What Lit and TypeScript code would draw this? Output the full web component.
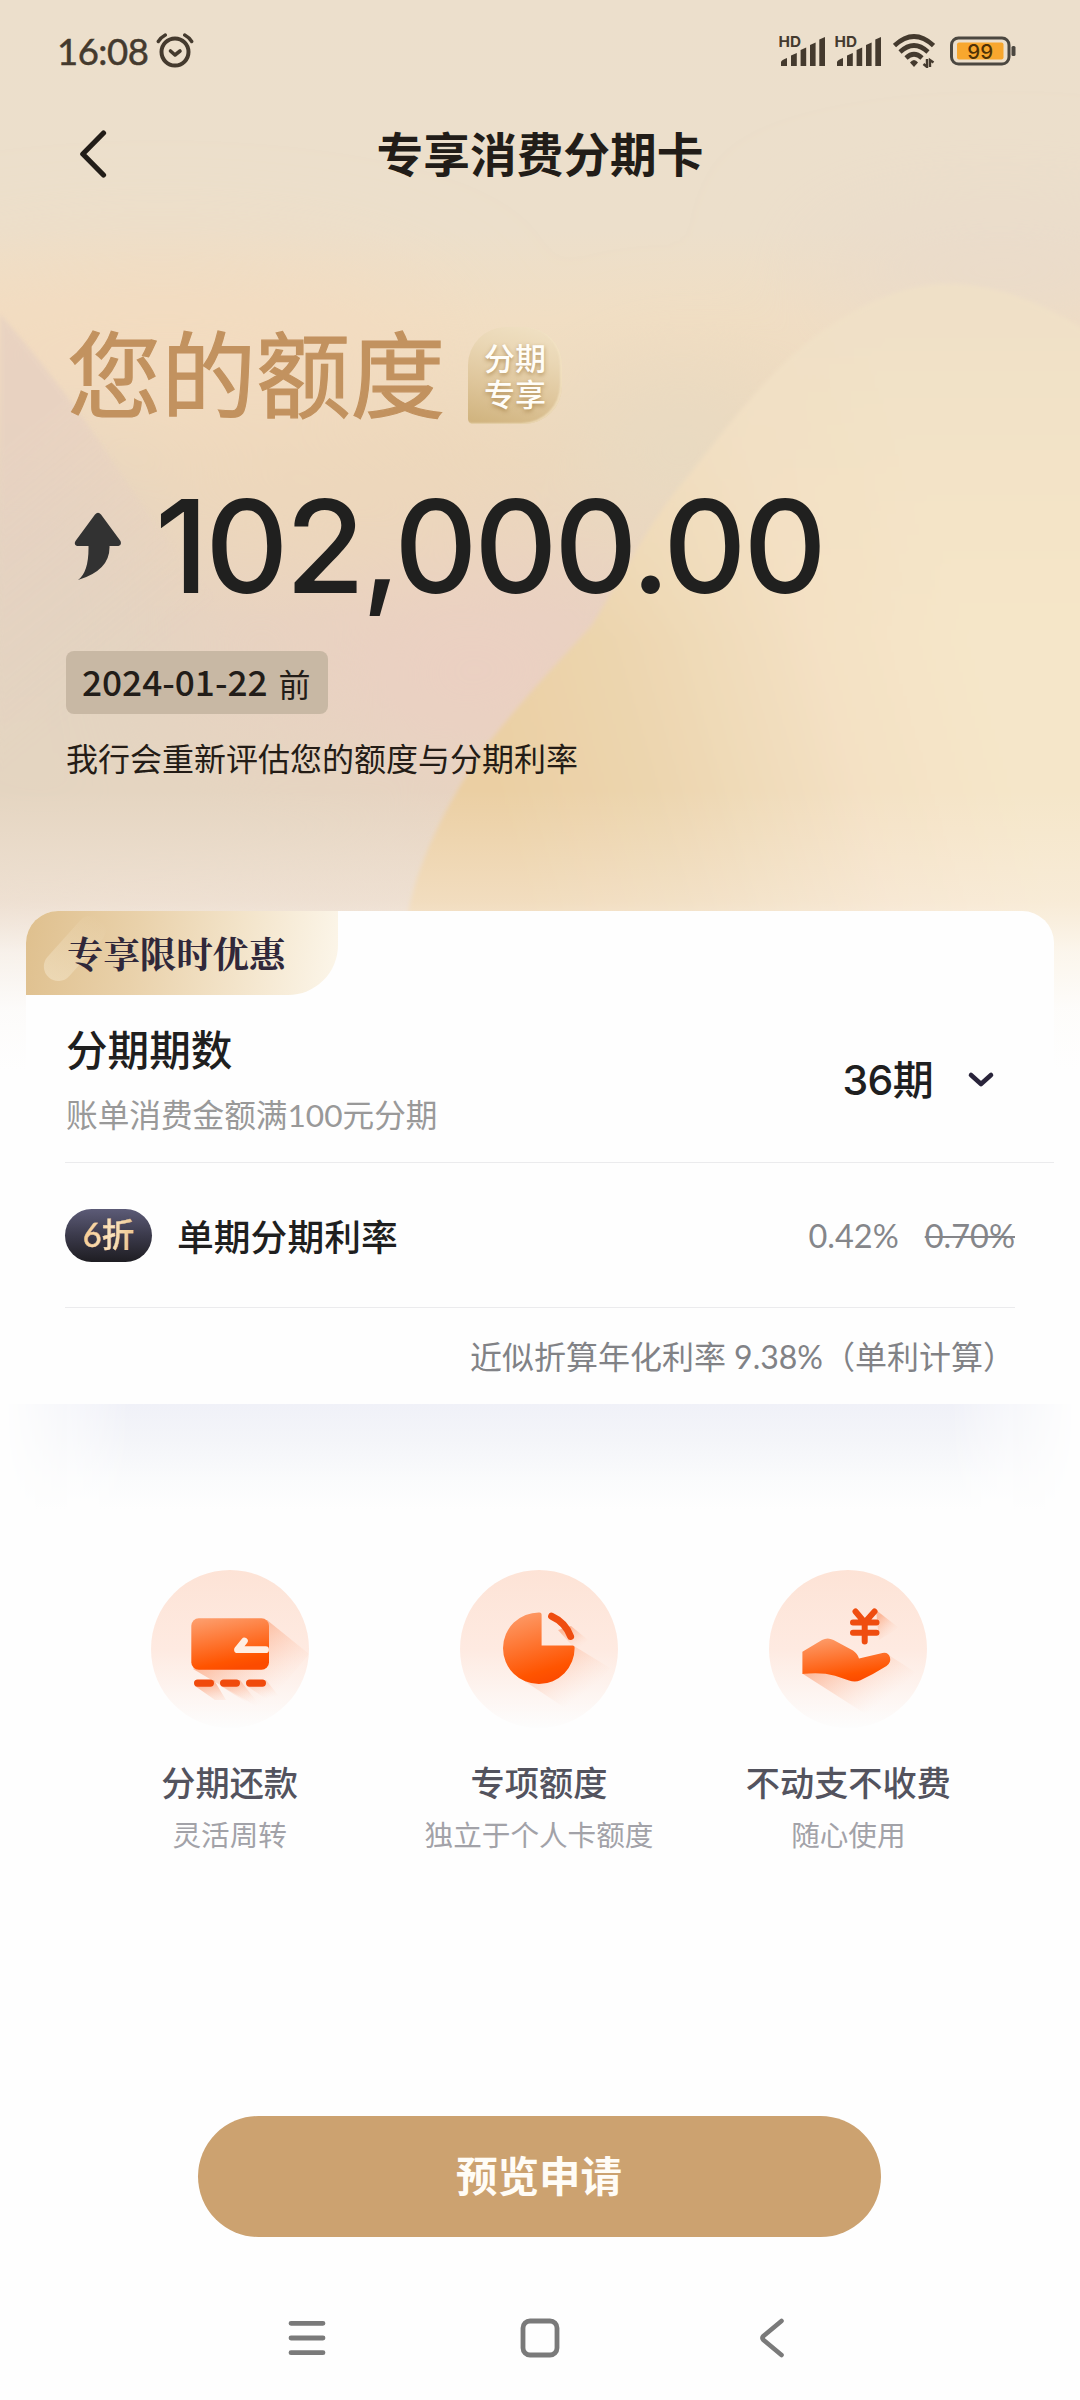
import { LitElement, html, css, svg } from "lit";
import { customElement } from "lit/decorators.js";

interface Feature {
  icon: unknown;
  title: string;
  note: string;
}

const walletIcon = svg`
  <path d="M116 50 L158 84 L112 140 L42 99 Z" fill="url(#cast)"></path>
  <path d="M44 116 L63 110 L75 130 L64 130 Z M70 116 L89 110 L106 132 L95 132 Z M96 116 L115 110 L134 134 L122 134 Z" fill="url(#castSmall)"></path>
  <rect x="40.3" y="48.3" width="77.7" height="51.4" rx="7.5" fill="url(#body)"></rect>
  <path d="M114.600 79.7 H86.5 L93.4 71" fill="none" stroke="#ffeee3" stroke-width="6.8" stroke-linejoin="round" stroke-linecap="round"></path>
  <g fill="#f04a0c"><rect x="43" y="109.4" width="20" height="7.4" rx="3.7"></rect><rect x="69" y="109.4" width="20" height="7.4" rx="3.7"></rect><rect x="95" y="109.4" width="20" height="7.4" rx="3.7"></rect></g>`;

const pieIcon = svg`
  <path d="M114 76 L150 98 L114 144 L54 104 Z" fill="url(#cast)"></path>
  <path d="M111 56 L128 70 L118 82 L98 60Z" fill="url(#castSmall)"></path>
  <path d="M79.5 42.4 Q81.6 42.4 81.6 44.4 V75.5 H112.6 Q114.6 75.5 114.6 77.5 A35.8 35.8 0 1 1 79.5 42.4 Z" fill="url(#body)"></path>
  <path d="M91.6 46.2 A36 36 0 0 1 110.6 66.4" fill="none" stroke="#ef4d10" stroke-width="7" stroke-linecap="round"></path>`;

const handIcon = svg`
  <path d="M118 84 L146 102 L106 150 L34 104 Z" fill="url(#cast)"></path>
  <path d="M107 40 L130 58 L110 70 Z" fill="url(#castSmall)"></path>
  <path d="M33.4 81.7 L53 70 Q58.6 66.800 64.500 70 L84 80.500 Q88.500 83.500 90 88.500 L113.500 82.900 Q119.500 81.800 121 87.500 Q122.300 92.500 117.500 96 Q104 104.500 91.500 110.300 Q86 112.800 80 110.500 L66 105.700 Q52 101.800 33.4 104 Z" fill="url(#body)"></path>
  <path d="M86.500 41.500 L95.700 52.500 L105.500 41.500 M95.700 52.500 V71.500 M84 52.600 H107.500 M84 62.700 H107.500" fill="none" stroke="#ef4d10" stroke-width="6" stroke-linecap="round"></path>`;

@customElement("signal-bars")
export class SignalBars extends LitElement {
  static styles = css`
    :host { display: block; width: 47px; height: 32px; }
    svg { display: block; }
    .hd { font: 700 14.500px Inter, sans-serif; fill: #443a2e; }
  `;
  render() {
    return html`<svg width="48" height="32" viewBox="0 0 48 32">
      <text class="hd" x="-0.5" y="13" textLength="22.500" lengthAdjust="spacingAndGlyphs">HD</text>
      <g fill="#443a2e">
        <path d="M2 32 V28 Q2.500 26 8 24 V32 Z"></path>
        <path d="M12 32 V21.500 L17.800 19 V32 Z"></path>
        <path d="M21.600 32 V16 L27.200 13.500 V32 Z"></path>
        <path d="M31 32 V11 L36.600 8.500 V32 Z"></path>
        <path d="M40.300 32 V5.500 L46 3 V32 Z"></path>
      </g>
    </svg>`;
  }
}

@customElement("feature-item")
export class FeatureItem extends LitElement {
  static properties = { feature: { attribute: false } };
  declare feature: Feature;
  static styles = css`
    :host { display: flex; flex-direction: column; align-items: center; flex: 1; }
    svg { display: block; }
    .title { margin-top: 35px; line-height: 40px; font-size: 34.200px; font-weight: 500; color: #53535e; white-space: nowrap; }
    .note { margin-top: 13px; line-height: 38px; font-size: 28.600px; color: #a2a2a8; white-space: nowrap; }
  `;
  render() {
    return html`
      <svg width="158" height="158" viewBox="0 0 158 158">
        <defs>
          <linearGradient id="disc" x1="0" y1="0" x2="0" y2="1">
            <stop offset="0" stop-color="#fde3d6"></stop>
            <stop offset=".5" stop-color="#feeae1"></stop>
            <stop offset="1" stop-color="#fdfdfd"></stop>
          </linearGradient>
          <linearGradient id="body" x1=".2" y1="0" x2=".5" y2="1">
            <stop offset="0" stop-color="#fd9c6a"></stop>
            <stop offset=".85" stop-color="#ff5400"></stop>
            <stop offset="1" stop-color="#fc4b00"></stop>
          </linearGradient>
          <linearGradient id="cast" x1="66" y1="76" x2="110" y2="134" gradientUnits="userSpaceOnUse">
            <stop offset="0" stop-color="#fb8a58" stop-opacity=".6"></stop>
            <stop offset="1" stop-color="#fdd0bb" stop-opacity="0"></stop>
          </linearGradient>
          <linearGradient id="castSmall" x1=".2" y1=".2" x2=".7" y2=".85">
            <stop offset="0" stop-color="#fb8a58" stop-opacity=".5"></stop>
            <stop offset="1" stop-color="#fdd0bb" stop-opacity="0"></stop>
          </linearGradient>
          <clipPath id="round"><circle cx="79" cy="79" r="79"></circle></clipPath>
        </defs>
        <circle cx="79" cy="79" r="79" fill="url(#disc)"></circle>
        <g clip-path="url(#round)">${this.feature.icon}</g>
      </svg>
      <div class="title">${this.feature.title}</div>
      <div class="note">${this.feature.note}</div>
    `;
  }
}

@customElement("app-root")
export class AppRoot extends LitElement {
  static styles = css`
    :host { display: block; font-family: Lato, "Noto Sans CJK SC", sans-serif; color: #1f1f1f; }
    .page { display: grid; grid-template: 2400px / 1080px; background: #fefefe; overflow: hidden; }
    .backdrop, .content { grid-area: 1 / 1; }
    .backdrop { display: block; width: 1080px; height: 1100px; }
    .content { position: relative; display: flex; flex-direction: column; }
    svg { display: block; }

    .status { display: flex; align-items: center; height: 102px; padding: 0 64px 0 57px; box-sizing: border-box; }
    .time { font-size: 36.500px; line-height: 40px; color: #443a2e; letter-spacing: -0.500px; -webkit-text-stroke: 0.500px #443a2e; }
    .alarm { margin: -2px 0 0 8px; }
    .indicators { display: flex; align-items: center; margin-left: auto; }
    .indicators signal-bars { margin-right: 9px; margin-top: -3px; }
    .wifi { margin-left: 2px; }
    .battery { margin-left: 15px; }
    .charge { font: 500 20.500px Inter, sans-serif; fill: #4d3107; }

    .bar { display: grid; grid-template-columns: 1fr auto 1fr; align-items: center; height: 104px; padding: 0 79px; }
    .bar h1 { margin: 0; font-size: 46.700px; line-height: 60px; font-weight: 700; color: #221d18; }

    .hero { padding: 121px 66px 0; }
    .headline { display: flex; align-items: center; height: 96px; }
    .headline h2 { margin: 0 0 0 1px; font-size: 94.500px; line-height: 96px; font-weight: 400; color: #c2925f; -webkit-text-stroke: 1.200px #c2925f; width: 401px; white-space: nowrap; }
    .stamp { width: 94px; height: 97px; border-radius: 38px 38px 38px 5px; box-sizing: border-box; padding: 13px 0 0 16px; font-size: 31px; line-height: 36.500px; font-weight: 500; color: #fffdf8; text-shadow: 0 2px 4px rgba(150, 110, 50, .65); background: linear-gradient(15deg, #cfb27c 0%, #dec59a 35%, #ead7b5 70%, #f1e2c6 100%); box-shadow: inset -2px -1px 2px rgba(245, 230, 200, .7); }
    .amount { display: flex; align-items: center; height: 120px; margin-top: 63px; }
    .amount svg { margin-left: 8px; }
    .amount strong { margin-left: 33px; font: 500 129px/120px Inter, sans-serif; letter-spacing: -3.200px; color: #20201f; white-space: nowrap; }
    .deadline { display: flex; align-items: center; width: 262px; height: 63px; margin-top: 45px; padding-left: 16px; box-sizing: border-box; border-radius: 8px; background: #c8b8a4; color: #221d19; white-space: nowrap; }
    .date { font: 500 35.200px/58px "Noto Sans CJK SC", sans-serif; margin-top: -3px; }
    .before { margin-left: 11px; font-size: 32px; }
    .hint { margin: 25px 0 0 0; font-size: 32px; line-height: 40px; color: #241c16; white-space: nowrap; }

    .card { margin: 132px 26px 0 26px; height: 493px; border-radius: 32px 32px 0 0; background: #fefefe; overflow: hidden; }
    .tab { position: relative; display: flex; align-items: center; width: 312px; height: 84px; box-sizing: border-box; padding: 0 0 3px 41px; border-radius: 0 0 50px 0; background: linear-gradient(98deg, #dfc08e 0%, #e9d1aa 35%, #f3e4ca 68%, #fcf6ea 100%); overflow: hidden; }
    .tab::before { content: ""; position: absolute; left: 19px; top: -8px; width: 29px; height: 78px; border-radius: 15px; background: linear-gradient(transparent, rgba(255, 250, 235, .35)); transform: rotate(42deg); transform-origin: 14px 62px; }
    .tab span { position: relative; font-family: "Noto Serif CJK SC", "Noto Serif SC", "Noto Sans CJK SC", serif; font-size: 36.400px; line-height: 50px; font-weight: 700; color: #30283a; white-space: nowrap; }
    .term { display: flex; height: 168px; margin-left: 39px; padding: 30px 59px 0 1px; box-sizing: border-box; border-bottom: 1px solid #ebebed; }
    .term-label { font-size: 41.600px; line-height: 50px; font-weight: 500; }
    .term-note { margin-top: 20px; font-size: 31.650px; line-height: 40px; color: #999; }
    .term-value { display: flex; align-items: center; margin-left: auto; height: 110px; font: 500 41px/60px Inter, "Noto Sans CJK SC", sans-serif; letter-spacing: -0.700px; }
    .term-value svg { margin-left: 34px; }
    .rate { display: flex; align-items: center; height: 145px; margin: 0 39px; box-sizing: border-box; border-bottom: 1px solid #ebebed; }
    .discount { display: flex; align-items: center; justify-content: center; width: 87px; height: 53px; border-radius: 27px; background: linear-gradient(#5c5b77, #3b3a4b 50%, #1e1d22); }
    .discount span { font-size: 32.500px; line-height: 44px; font-weight: 500; color: transparent; background: linear-gradient(100deg, #f8c98b, #fbe4c0 55%, #e9bd80); -webkit-background-clip: text; background-clip: text; -webkit-text-stroke: 0.300px #f6d5a4; }
    .rate-label { margin-left: 25px; font-size: 36.800px; font-weight: 500; }
    .rate-now { margin-left: auto; }
    .rate-now, .rate-old { font-size: 32.500px; color: #85868a; }
    .rate-old { margin-left: 26px; text-decoration: line-through; text-decoration-thickness: 2px; }
    .annual { display: flex; align-items: center; justify-content: flex-end; height: 94px; padding-right: 39px; font-size: 32px; color: #818286; white-space: pre; }
    .shade { height: 106px; background: linear-gradient(#f0f1f8, #f4f5f9 35%, #fafbfc 70%, #fefefe); -webkit-mask-image: linear-gradient(90deg, transparent 4px, #000 130px 950px, transparent 1076px); mask-image: linear-gradient(90deg, transparent 4px, #000 130px 950px, transparent 1076px); }

    .features { display: flex; padding: 60px 77px 0 75px; height: 606px; box-sizing: border-box; }
    .apply { align-self: center; width: 683px; height: 121px; border: 0; margin: 0 2px 0 0; border-radius: 61px; background: #cca270; color: #fffcf6; font: 700 41.500px/60px Lato, "Noto Sans CJK SC", sans-serif; padding: 0 0 2px; }
    .nav { display: flex; align-items: center; justify-content: space-between; margin-top: 39px; height: 124px; padding: 0 295px 0 288px; }
    .home { margin-right: 6px; }
  `;

  private features: Feature[] = [
    { icon: walletIcon, title: "分期还款", note: "灵活周转" },
    { icon: pieIcon, title: "专项额度", note: "独立于个人卡额度" },
    { icon: handIcon, title: "不动支不收费", note: "随心使用" },
  ];

  private backdrop() {
    return html`<svg class="backdrop" width="1080" height="1100" viewBox="0 0 1080 1100">
      <defs>
        <linearGradient id="base" x1="0" y1="0" x2="0" y2="1100" gradientUnits="userSpaceOnUse">
          <stop offset="0" stop-color="#ecdfcc"></stop>
          <stop offset=".21" stop-color="#ecdfcb"></stop>
          <stop offset=".29" stop-color="#f1dec3"></stop>
          <stop offset=".42" stop-color="#edd8bc"></stop>
          <stop offset=".56" stop-color="#e8d2c1"></stop>
          <stop offset="1" stop-color="#e6d5c2"></stop>
        </linearGradient>
        <linearGradient id="wingFade" x1="60" y1="400" x2="220" y2="600" gradientUnits="userSpaceOnUse">
          <stop offset="0" stop-color="#fff"></stop>
          <stop offset="1" stop-color="#000"></stop>
        </linearGradient>
        <linearGradient id="petal" x1="480" y1="740" x2="960" y2="600" gradientUnits="userSpaceOnUse">
          <stop offset="0" stop-color="#ebcfa3"></stop>
          <stop offset=".3" stop-color="#ecd5ae"></stop>
          <stop offset=".7" stop-color="#f4e1c4"></stop>
          <stop offset="1" stop-color="#f5e6c9"></stop>
        </linearGradient>
        <linearGradient id="petalTop" x1="0" y1="280" x2="0" y2="640" gradientUnits="userSpaceOnUse">
          <stop offset="0" stop-color="#efe0c7"></stop>
          <stop offset="1" stop-color="#f3dfc2" stop-opacity="0"></stop>
        </linearGradient>
        <linearGradient id="fade" x1="0" y1="790" x2="0" y2="1070" gradientUnits="userSpaceOnUse">
          <stop offset="0" stop-color="#fdf4ee" stop-opacity="0"></stop>
          <stop offset=".4" stop-color="#fdf5f0" stop-opacity=".36"></stop>
          <stop offset=".58" stop-color="#fefcfa" stop-opacity=".72"></stop>
          <stop offset=".78" stop-color="#fefefe" stop-opacity=".93"></stop>
          <stop offset="1" stop-color="#fefefe"></stop>
        </linearGradient>
        <filter id="soft" x="-50%" y="-50%" width="200%" height="200%"><feGaussianBlur stdDeviation="55"></feGaussianBlur></filter>
        <filter id="edge" x="-10%" y="-10%" width="120%" height="120%"><feGaussianBlur stdDeviation="2"></feGaussianBlur></filter>
        <mask id="wingMask" maskUnits="userSpaceOnUse" x="-10" y="200" width="700" height="900"><rect x="-10" y="200" width="700" height="900" fill="url(#wingFade)"></rect></mask>
      </defs>
      <rect width="1080" height="1100" fill="url(#base)"></rect>
      <g filter="url(#soft)">
        <ellipse cx="160" cy="345" rx="290" ry="75" fill="#f3dbc0"></ellipse>
        <ellipse cx="1000" cy="270" rx="200" ry="50" fill="#e9dacb"></ellipse>
        <ellipse cx="680" cy="450" rx="110" ry="80" fill="#e8dac2"></ellipse>
        <ellipse cx="330" cy="500" rx="200" ry="60" fill="#edd7bb"></ellipse>
        <ellipse cx="10" cy="680" rx="170" ry="240" fill="#e3d4c1"></ellipse>
        <ellipse cx="480" cy="670" rx="150" ry="90" fill="#ebd0c2"></ellipse>
        <ellipse cx="170" cy="830" rx="320" ry="80" fill="#e5d5c1"></ellipse>
      </g>
      <path d="M0 314 Q50 370 104 448 Q170 550 250 640 L0 800 Z" fill="#e7d1c2" opacity=".8" mask="url(#wingMask)" filter="url(#edge)"></path>
      <g filter="url(#edge)">
        <path d="M405 930 C415 860 450 800 482 751 C530 690 570 650 592 625 C620 580 650 520 689 475 C740 410 780 360 826 329 C870 300 905 285 950 284 Q1020 286 1090 334 V1110 H380 Z" fill="url(#petal)"></path>
        <path d="M405 930 C415 860 450 800 482 751 C530 690 570 650 592 625 C620 580 650 520 689 475 C740 410 780 360 826 329 C870 300 905 285 950 284 Q1020 286 1090 334 V1110 H380 Z" fill="url(#petalTop)"></path>
      </g>
      <rect y="760" width="1080" height="340" fill="url(#fade)"></rect>
    </svg>`;
  }

  render() {
    return html`
      <div class="page">
        ${this.backdrop()}
        <div class="content">
          <div class="status">
            <span class="time">16:08</span>
            <svg class="alarm" width="38" height="36" viewBox="0 0 38 36" fill="none" stroke="#443a2e" stroke-linecap="round">
              <circle cx="19" cy="20" r="13.500" stroke-width="4"></circle>
              <path d="M14.500 19 L19 23 L24 19" stroke-width="3.600" stroke-linejoin="round"></path>
              <path d="M2.300 9.500 Q5 5.300 9.300 3 M28.700 3 Q33 5.300 35.700 9.500" stroke-width="3.400"></path>
            </svg>
            <div class="indicators">
              <signal-bars></signal-bars>
              <signal-bars></signal-bars>
              <svg class="wifi" width="42" height="34" viewBox="0 0 42 34" fill="none" stroke="#443a2e" stroke-width="4.600">
                <path d="M1.500 11.500 Q21 -6.500 40.500 11.500"></path>
                <path d="M7 18 Q21 5 35 18"></path>
                <path d="M13 24 Q21 16.500 29 24"></path>
                <path d="M17 28.500 Q21 23.500 25 28.500 L21 33 Z" fill="#443a2e" stroke="none"></path>
                <path d="M34 25 V33 L30.500 30 M37 33 V26 L40.500 28.500" stroke-width="2.400"></path>
              </svg>
              <svg class="battery" width="66" height="30" viewBox="0 0 66 30">
                <rect x="1.500" y="2" width="57.500" height="26" rx="7" fill="none" stroke="#4b4740" stroke-width="3"></rect>
                <rect x="7" y="6.500" width="46.500" height="17" rx="2" fill="#f8a72e"></rect>
                <rect x="61.500" y="10" width="4" height="10" rx="1.500" fill="#4b4740"></rect>
                <text class="charge" x="30.200" y="22.500" text-anchor="middle">99</text>
              </svg>
            </div>
          </div>
          <header class="bar">
            <svg width="28" height="50" viewBox="0 0 28 50" fill="none" stroke="#221d18" stroke-width="5.200" stroke-linecap="round" stroke-linejoin="round">
              <path d="M24.500 4 L3.800 25 L24.500 46"></path>
            </svg>
            <h1>专享消费分期卡</h1>
          </header>
          <section class="hero">
            <div class="headline">
              <h2>您的额度</h2>
              <div class="stamp">分期<br />专享</div>
            </div>
            <div class="amount">
              <svg width="48" height="68" viewBox="0 0 48 68" fill="#323232">
                <path d="M21 2.500 Q24 -1 27 2.500 L46.500 29 Q48 33 44.500 34 H35.500 Q36.500 58 4 68 Q15 60 14.500 34 H3 Q-0.500 33 1.500 29 Z"></path>
              </svg>
              <strong>102,000.00</strong>
            </div>
            <div class="deadline"><span class="date">2024-01-22</span><span class="before">前</span></div>
            <div class="hint">我行会重新评估您的额度与分期利率</div>
          </section>
          <section class="card">
            <div class="tab"><span>专享限时优惠</span></div>
            <div class="term">
              <div>
                <div class="term-label">分期期数</div>
                <div class="term-note">账单消费金额满100元分期</div>
              </div>
              <div class="term-value">
                36期
                <svg width="28" height="18" viewBox="0 0 28 18" fill="none" stroke="#29243a" stroke-width="4.600" stroke-linecap="round" stroke-linejoin="round">
                  <path d="M4 4 L14 13 L24 4"></path>
                </svg>
              </div>
            </div>
            <div class="rate">
              <div class="discount"><span>6折</span></div>
              <div class="rate-label">单期分期利率</div>
              <div class="rate-now">0.42%</div>
              <div class="rate-old">0.70%</div>
            </div>
            <div class="annual">近似折算年化利率 9.38%（单利计算）</div>
          </section>
          <div class="shade"></div>
          <section class="features">
            ${this.features.map((f) => html`<feature-item .feature=${f}></feature-item>`)}
          </section>
          <button class="apply">预览申请</button>
          <nav class="nav">
            <svg width="38" height="36" viewBox="0 0 38 36" stroke="#7a7a7a" stroke-width="4.800" stroke-linecap="round">
              <path d="M3 3.300 H35 M3 18 H35 M3 32.700 H35"></path>
            </svg>
            <svg class="home" width="40" height="40" viewBox="0 0 40 40" fill="none" stroke="#7a7a7a" stroke-width="4.800">
              <rect x="3" y="3" width="34" height="34" rx="7"></rect>
            </svg>
            <svg width="26" height="40" viewBox="0 0 26 40" fill="none" stroke="#7a7a7a" stroke-width="4.600" stroke-linecap="round" stroke-linejoin="round">
              <path d="M22.500 3 L4.500 18 Q2.500 20 4.500 22 L22.500 37"></path>
            </svg>
          </nav>
        </div>
      </div>
    `;
  }
}
